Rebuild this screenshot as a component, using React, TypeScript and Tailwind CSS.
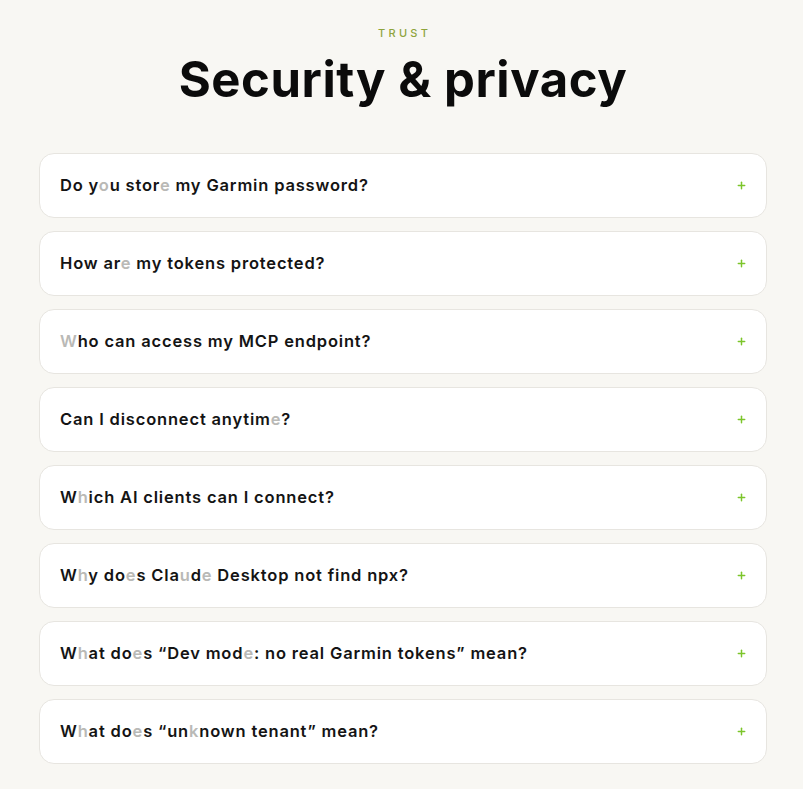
import { Plus } from 'lucide-react';

type Part = string | { dim: string };

const questions: Part[][] = [
  ['Do y', { dim: 'o' }, 'u stor', { dim: 'e' }, ' my Garmin password?'],
  ['How ar', { dim: 'e' }, ' my tokens protected?'],
  [{ dim: 'W' }, 'ho can access my MCP endpoint?'],
  ['Can I disconnect anytim', { dim: 'e' }, '?'],
  ['W', { dim: 'h' }, 'ich AI clients can I connect?'],
  ['W', { dim: 'h' }, 'y do', { dim: 'e' }, 's Cla', { dim: 'u' }, 'd', { dim: 'e' }, ' Desktop not find npx?'],
  ['W', { dim: 'h' }, 'at do', { dim: 'e' }, 's \u201cDev mod', { dim: 'e' }, ': no real Garmin tokens\u201d mean?'],
  ['W', { dim: 'h' }, 'at do', { dim: 'e' }, 's \u201cun', { dim: 'k' }, 'nown tenant\u201d mean?'],
];

function Question({ parts }: { parts: Part[] }) {
  return (
    <span>
      {parts.map((p, i) =>
        typeof p === 'string' ? (
          <span key={i}>{p}</span>
        ) : (
          <span key={i} className="text-[#b9b9b6]">
            {p.dim}
          </span>
        )
      )}
    </span>
  );
}

export default function App() {
  return (
    <div
      className="min-h-[789px] bg-[#f8f7f3] pt-[27px] pb-6"
      style={{ fontFamily: 'Inter, "Liberation Sans", sans-serif' }}
    >
      {/* Header */}
      <div className="flex flex-col items-center pl-[3px]">
        <p className="text-[11px] font-medium tracking-[0.3em] text-[#8fa43c] leading-none py-[1px] pl-[0.3em]">
          TRUST
        </p>
        <h2 className="mt-[12px] text-[49px] font-bold leading-[56px] tracking-[0.012em] text-[#0b0b0b]">
          Security &amp; privacy
        </h2>
      </div>

      {/* FAQ list */}
      <div className="ml-[39px] mt-[45px] flex w-[728px] flex-col gap-[13px]">
        {questions.map((q, i) => (
          <button
            key={i}
            type="button"
            className="flex h-[65px] w-full items-center justify-between rounded-[15px] border border-[#e7e5e0] bg-white pl-[20px] pr-[19px] text-left"
          >
            <span className="text-[16.5px] font-semibold tracking-[0.05em] text-[#141414]">
              <Question parts={q} />
            </span>
            <Plus size={11} strokeWidth={3.2} className="text-[#7cc52b]" />
          </button>
        ))}
      </div>
    </div>
  );
}
